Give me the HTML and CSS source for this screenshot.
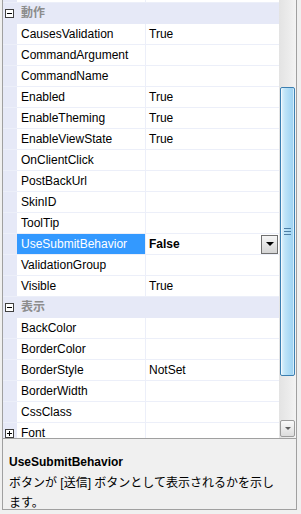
FILE: index.html
```html
<!DOCTYPE html>
<html lang="ja">
<head>
  <meta charset="UTF-8" />
  <title>プロパティ</title>
  <link rel="stylesheet" href="styles.css">
</head>
<body>
  <div class="window">
    <div class="grid">
      <div class="rows">
        <div class="row"><span class="gutter"></span><span class="name"></span><span class="value"></span></div>

        <div class="row category"><span class="gutter"><i class="box minus"></i></span><span class="cat-name">動作</span></div>
        <div class="row"><span class="gutter"></span><span class="name">CausesValidation</span><span class="value">True</span></div>
        <div class="row"><span class="gutter"></span><span class="name">CommandArgument</span><span class="value"></span></div>
        <div class="row"><span class="gutter"></span><span class="name">CommandName</span><span class="value"></span></div>
        <div class="row"><span class="gutter"></span><span class="name">Enabled</span><span class="value">True</span></div>
        <div class="row"><span class="gutter"></span><span class="name">EnableTheming</span><span class="value">True</span></div>
        <div class="row"><span class="gutter"></span><span class="name">EnableViewState</span><span class="value">True</span></div>
        <div class="row"><span class="gutter"></span><span class="name">OnClientClick</span><span class="value"></span></div>
        <div class="row"><span class="gutter"></span><span class="name">PostBackUrl</span><span class="value"></span></div>
        <div class="row"><span class="gutter"></span><span class="name">SkinID</span><span class="value"></span></div>
        <div class="row"><span class="gutter"></span><span class="name">ToolTip</span><span class="value"></span></div>
        <div class="row selected">
          <span class="gutter"></span><span class="name">UseSubmitBehavior</span>
          <span class="value"><b>False</b><span class="drop"><i class="tri"></i></span></span>
        </div>
        <div class="row"><span class="gutter"></span><span class="name">ValidationGroup</span><span class="value"></span></div>
        <div class="row"><span class="gutter"></span><span class="name">Visible</span><span class="value">True</span></div>

        <div class="row category"><span class="gutter"><i class="box minus"></i></span><span class="cat-name">表示</span></div>
        <div class="row"><span class="gutter"></span><span class="name">BackColor</span><span class="value"></span></div>
        <div class="row"><span class="gutter"></span><span class="name">BorderColor</span><span class="value"></span></div>
        <div class="row"><span class="gutter"></span><span class="name">BorderStyle</span><span class="value">NotSet</span></div>
        <div class="row"><span class="gutter"></span><span class="name">BorderWidth</span><span class="value"></span></div>
        <div class="row"><span class="gutter"></span><span class="name">CssClass</span><span class="value"></span></div>
        <div class="row"><span class="gutter"><i class="box plus"></i></span><span class="name">Font</span><span class="value"></span></div>
      </div>

      <div class="scrollbar">
        <div class="track">
          <div class="thumb"><span class="grip"></span></div>
        </div>
        <div class="arrow"><i class="tri small"></i></div>
      </div>
    </div>

    <div class="desc">
      <div class="desc-title">UseSubmitBehavior</div>
      <div class="desc-text">ボタンが [送信] ボタンとして表示されるかを示し<br>ます。</div>
    </div>
  </div>
</body>
</html>
```

FILE: styles.css
```css
* {
  margin: 0;
  padding: 0;
  box-sizing: border-box;
}

body {
  background-color: #f0f0f0;
  font-family: 'Liberation Sans', 'Noto Sans CJK JP', sans-serif;
  font-size: 12px;
  color: #000;
}

.window {
  width: 301px;
  height: 514px;
  padding: 0 4px 0 2px;
  overflow: hidden;
}

/* プロパティグリッド */
.grid {
  display: flex;
  height: 439px;
  border-left: 1px solid #a0a0a0;
  border-right: 1px solid #a0a0a0;
  border-bottom: 1px solid #a0a0a0;
  overflow: hidden;
}

.rows {
  width: 276px;
  margin-top: -18px;
  background-color: #fff;
}

.row {
  display: flex;
  height: 21px;
  line-height: 20px;
  border-bottom: 1px solid #eceff9;
}

.gutter {
  width: 14px;
  flex: none;
  background-color: #e6e9f7;
  position: relative;
}

.name {
  width: 129px;
  flex: none;
  padding-left: 4px;
  border-right: 1px solid #eceff9;
  white-space: nowrap;
  overflow: hidden;
}

.value {
  flex: 1;
  padding-left: 3px;
  display: flex;
  align-items: center;
  justify-content: space-between;
}

.category {
  background-color: #e6e9f7;
  border-bottom-color: #e6e9f7;
}

.cat-name {
  padding-left: 4px;
  color: #8c8c8c;
  font-weight: bold;
}

.selected .name {
  background-color: #3399ff;
  color: #fff;
}

.selected .value b {
  font-weight: bold;
}

/* 展開ボックス */
.box {
  position: absolute;
  left: 2px;
  top: 6px;
  width: 9px;
  height: 9px;
  border: 1px solid #404040;
  background-color: #fff;
}

.box::before,
.box::after {
  content: '';
  position: absolute;
  background-color: #000;
}

.box::before {
  left: 1px;
  top: 3px;
  width: 5px;
  height: 1px;
}

.plus::after {
  left: 3px;
  top: 1px;
  width: 1px;
  height: 5px;
}

/* ドロップダウンボタン */
.drop {
  width: 17px;
  height: 19px;
  margin-right: 1px;
  border: 1px solid #707070;
  background: linear-gradient(#f6f6f6, #d4d4d4);
  display: flex;
  align-items: center;
  justify-content: center;
}

.tri {
  width: 0;
  height: 0;
  border-left: 4px solid transparent;
  border-right: 4px solid transparent;
  border-top: 4px solid #000;
}

.tri.small {
  border-left-width: 3px;
  border-right-width: 3px;
  border-top: 3px solid #606060;
}

/* スクロールバー */
.scrollbar {
  width: 17px;
  display: flex;
  flex-direction: column;
  background: linear-gradient(to right, #e3e3e3, #ececec 60%, #f4f4f4);
}

.track {
  flex: 1;
  padding: 87px 1px 0 1px;
}

.thumb {
  height: 289px;
  border: 1px solid #3c7fb1;
  border-radius: 2px;
  background: linear-gradient(to right, #e3f4fc, #bfe4f8 30%, #a9d9f5 70%, #9bd0f0);
  box-shadow: inset 1px 0 0 #f2faff, inset -1px 0 0 #d6eefb;
  display: flex;
  align-items: center;
  justify-content: center;
}

.grip {
  width: 7px;
  height: 7px;
  background: repeating-linear-gradient(#4d7fa6 0 1px, transparent 1px 3px);
}

.arrow {
  height: 17px;
  margin: 0 1px 1px 1px;
  border: 1px solid #9c9c9c;
  border-radius: 2px;
  background: linear-gradient(#fafafa, #dcdcdc);
  display: flex;
  align-items: center;
  justify-content: center;
}

/* 説明パネル */
.desc {
  height: 71px;
  padding: 13px 6px 0 6px;
  border-left: 1px solid #a0a0a0;
  border-right: 1px solid #a0a0a0;
  border-bottom: 1px solid #a0a0a0;
  line-height: 20px;
}

.desc-title {
  font-weight: bold;
  line-height: 21px;
}

.desc-text {
  white-space: nowrap;
}
```
